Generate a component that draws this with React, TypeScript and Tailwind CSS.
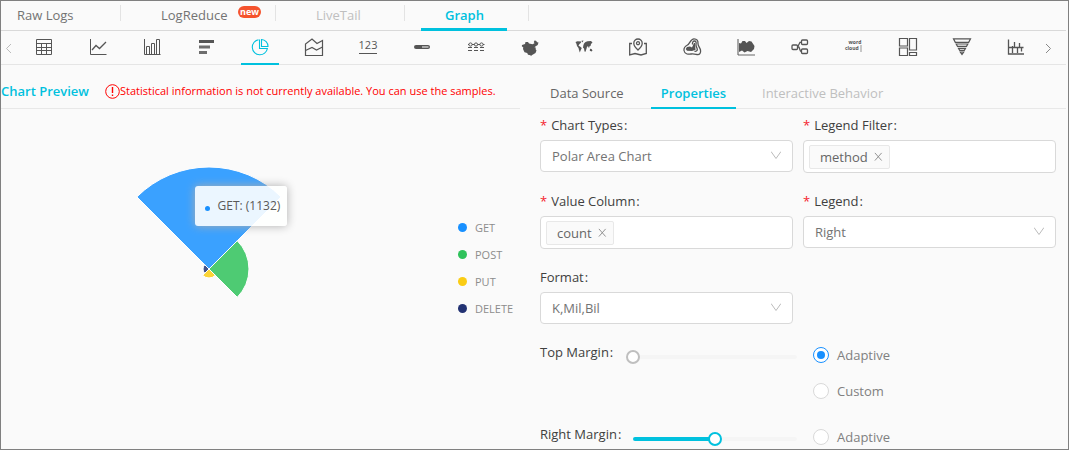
import React, { useState, type ReactNode } from "react";

const line = { fill: "none", stroke: "currentColor", strokeWidth: 1 } as const;

const icons: { name: string; art: ReactNode }[] = [
  {
    name: "Table",
    art: (
      <g {...line}>
        <path d="M1.500 1.500h15v15h-15zM1.500 5.500h15M1.500 9.500h15M1.500 12.500h15M6.500 5v11M11.500 5v11" />
      </g>
    ),
  },
  {
    name: "Line chart",
    art: (
      <g {...line}>
        <path d="M1.500 1v15.500h16" />
        <path d="M3 12l4-4.500 3.500 3L17 4" strokeWidth={1.3} />
      </g>
    ),
  },
  {
    name: "Bar chart",
    art: (
      <g {...line}>
        <path d="M1.500 1v15.500h16M3.500 16V8.500h3V16M8.500 16V5.500h3V16M13.500 16V1.500h3V16" />
      </g>
    ),
  },
  {
    name: "Horizontal bar chart",
    art: (
      <g fill="currentColor">
        <path d="M2 2h15v3H2z" />
        <path d="M2 7.500h11v3H2zM2 13h8v3H2z" opacity=".85" />
      </g>
    ),
  },
  {
    name: "Pie chart",
    art: (
      <g {...line} strokeWidth={1.1}>
        <path d="M7.500 1.700A7.600 7.600 0 1 0 16.400 10.500H8.500V1.500" />
        <path d="M10.500 1.500v7h6.500a7 7 0 0 0-6.500-7z" />
      </g>
    ),
  },
  {
    name: "Area chart",
    art: (
      <g {...line} strokeWidth={1.2}>
        <path d="M.5 17.500V6L7 1l5 4.500 5.500-3v15z" />
        <path d="M.5 12.500L7 9.500l4.500 2.500 6-3" />
      </g>
    ),
  },
  {
    name: "Single value",
    art: (
      <g>
        <text x="9" y="11" textAnchor="middle" fontSize="11" fill="currentColor">123</text>
        <path {...line} d="M0 15.500h18" />
      </g>
    ),
  },
  {
    name: "Progress",
    art: (
      <g>
        <rect x="1" y="7" width="16" height="4" rx="2" fill="currentColor" />
        <path stroke="#fff" d="M9 9h6.500" />
      </g>
    ),
  },
  {
    name: "Flow",
    art: (
      <g {...line}>
        <circle cx="3.500" cy="6.500" r="1.600" />
        <circle cx="9" cy="6.500" r="1.600" />
        <circle cx="14.500" cy="6.500" r="1.600" />
        <path d="M1 6.500h1M5 6.500h2.500M10.500 6.500h2.500M16 6.500h1.500" />
        <path d="M1 9.500h4M7 9.500h4M13 9.500h4M1 12.500h4M7 12.500h4M13 12.500h4" />
      </g>
    ),
  },
  {
    name: "China map",
    art: (
      <path
        fill="currentColor"
        d="M1 7l3-1 .5-2L7 4l1 1.500 3.500.8 2-1L12.800 4l.7-1.500 1.500.3 1.200 1.500 1.300.2-.8 2.500-2 1.200-1.200 1.100 1.500.4-.5 1.300 1 1.500-1 2.500-2.500 1.500-1.300.8-.7 1-.5-1-2.500-.5-.8-1.800-2.700-.7L2 11l.3-1.500L.8 8.300z"
      />
    ),
  },
  {
    name: "World map",
    art: (
      <path
        fill="currentColor"
        d="M.5 4l2-.8 4 .3-.8 1.500-1.200 1-1 1.800 1.500.8 1.800 1.500-1 1.800-1 2.600-.8-2.500-.5-2-1.500-2L1.500 6zM6.500 2.800l2-.3-1 2zM8.300 7.500l.7-2L10.500 4l2-.7 3.500-.3 1.500 1.500L16 6l-.5 2-1 .3-.5 2-1-2-1 .5-.5 2-1 3-1-.3-.5-3-1-.8zM15 10.800l1.500.2 1 1.500-1 1-1.700-.8z"
      />
    ),
  },
  {
    name: "Pin map",
    art: (
      <g {...line} strokeWidth={1.300}>
        <path d="M9 12S4.800 8.200 4.800 5.200a4.200 4.200 0 0 1 8.400 0C13.200 8.200 9 12 9 12z" />
        <circle cx="9" cy="5.200" r="1.500" />
        <path d="M3 5.500H.7v11.500l5.300-1.500 6 1.500 5.300-1.500V5.500H15" />
      </g>
    ),
  },
  {
    name: "Heat map",
    art: (
      <g {...line} strokeWidth={1.300}>
        <path d="M11 .8c3 0 4.200 2 4 4.700-.2 2.500 2 4 2.500 6.500.6 3-1 5-3.500 4.500-2-.4-3.500-.9-6-.5-3 .5-6.500-.5-7-3.500-.4-3 1.500-4.500 3.500-5.500C7 5.800 7.500.8 11 .8z" />
        <path d="M9.500 6.500c-.3-2 .5-3.500 2-3.500s1.900 1.500 1.500 3.500c-.2 2 1.300 3.500 1.300 5s-1.300 2-2.800 1.800" />
        <path fill="currentColor" stroke="none" d="M11 5h1l.5 7-2 .5L9 13l-5-.3L2.700 11 4 9l3-.5 2 1z" />
      </g>
    ),
  },
  {
    name: "Stream chart",
    art: (
      <g>
        <path fill="currentColor" d="M2 5l2 .5L5.500 3 8 3l1.500 2L12 3l2.500.5L17.500 8 17 11l-3 3-3.500-1-3 1.500L5 12.500 2 14z" />
        <path {...line} d="M1 1v16" />
        <path stroke="currentColor" strokeOpacity=".6" strokeWidth="1.500" d="M1 17h17" />
      </g>
    ),
  },
  {
    name: "Topology",
    art: (
      <g {...line} strokeWidth={1.300}>
        <rect x="1" y="7" width="5.500" height="4.500" rx="1" />
        <rect x="10.500" y="2" width="6" height="4.500" rx="1" />
        <rect x="10.500" y="11" width="6" height="4.500" rx="1" />
        <path d="M6.500 9.200L9 4.300h1.500M6.500 9.200h1.500l1.500 4h1" />
      </g>
    ),
  },
  {
    name: "Word cloud",
    art: (
      <g fill="currentColor" fontSize="5" fontWeight="700">
        <text x="3.500" y="5.500">word</text>
        <text x="0" y="12">cloud</text>
        <path d="M15.500 7h1v7h-1z" opacity=".6" />
      </g>
    ),
  },
  {
    name: "Treemap",
    art: (
      <g {...line} strokeWidth={1.200}>
        <path d="M.5.500h8v7.500h-8zM.5 10h8v7.500h-8zM10.500.500h7v11.500h-7zM10.500 14.500h7v3h-7z" />
      </g>
    ),
  },
  {
    name: "Funnel",
    art: (
      <g {...line} strokeWidth={1.200}>
        <path d="M.5.800h17l-1.800 3.500H2.300zM3.200 6h11.600l-1.300 2.300h-9zM5.500 10.300h7l-1.200 2H6.700zM7.300 14h3.400L9 16.500z" />
      </g>
    ),
  },
  {
    name: "Histogram",
    art: (
      <g {...line} strokeWidth={1.300}>
        <path d="M1.500 1.500v14.500H17M2 9.500h14.500M5.500 8V15M7.500 4v6M10.500 9.500V15M12.500 5v4.500M14.500 9V13.500" />
      </g>
    ),
  },
];

function Chevron({ d, className }: { d: string; className: string }) {
  return (
    <svg viewBox="0 0 10 10" className={className} fill="none" stroke="currentColor" aria-hidden="true">
      <path d={d} />
    </svg>
  );
}

const tabs = [
  { label: "Raw Logs", box: "w-[98px] pl-4", on: true },
  { label: "LogReduce", box: "w-[117px] pl-6", on: true },
  { label: "LiveTail", box: "w-[91px] pl-6", on: false },
  { label: "Graph", box: "w-[86px] pl-6", on: true },
];

function TopTabs() {
  return (
    <nav className="flex h-[30px] border-b border-[#d9d9d9]" aria-label="Views">
      {tabs.map(({ label, box, on }) => {
        const active = label === "Graph";
        return (
          <div key={label} className="flex shrink-0">
            <button
              type="button"
              disabled={!on}
              className={`relative -mb-px flex items-center whitespace-nowrap border-b-3 pt-px text-left ${box} ${
                active
                  ? "border-[#00c1de] font-semibold text-[#00c1de]"
                  : on
                    ? "border-transparent text-[#737373]"
                    : "border-transparent text-[#bfbfbf]"
              }`}
            >
              {label}
              {label === "LogReduce" && (
                <span className="absolute left-[101px] top-[5px] flex h-3 w-[23px] items-center justify-center rounded-full bg-[#f5532d] text-[9px] font-bold text-white">
                  new
                </span>
              )}
            </button>
            <span className="ml-[21px] mr-4 mt-1 h-4 w-px bg-[#e3e3e3]" />
          </div>
        );
      })}
    </nav>
  );
}

function ChartTypeBar() {
  return (
    <div className="flex h-[34px] border-b border-[#e5e5e5]" role="toolbar" aria-label="Chart type">
      <button type="button" aria-label="Previous" className="flex w-4 items-center justify-center text-[#bbb]">
        <Chevron d="M7 1L2.500 5.500 7 10" className="size-[10px]" />
      </button>
      {icons.map(({ name, art }) => (
        <button
          key={name}
          type="button"
          aria-label={name}
          className={`mx-2 -mb-px flex w-[38px] justify-center border-b-2 pt-[7px] ${
            name === "Pie chart" ? "border-[#00c1de] text-[#00c1de]" : "border-transparent text-[#555]"
          }`}
        >
          <svg viewBox="0 0 18 18" className="size-[18px] overflow-visible" aria-hidden="true">
            {art}
          </svg>
        </button>
      ))}
      <button type="button" aria-label="Next" className="flex w-[10px] items-center justify-center text-[#888]">
        <Chevron d="M3 1l4.500 4.500L3 10" className="size-[10px]" />
      </button>
    </div>
  );
}

const sectors = [
  { name: "GET", radius: 102, start: -135, color: "#1890ff", dot: "bg-[#1890ff]" },
  { name: "POST", radius: 40, start: -45, color: "#2fc25b", dot: "bg-[#2fc25b]" },
  { name: "PUT", radius: 9, start: 45, color: "#facc14", dot: "bg-[#facc14]" },
  { name: "DELETE", radius: 6, start: 135, color: "#223273", dot: "bg-[#223273]" },
];

function sectorPath(radius: number, start: number) {
  const at = (deg: number) => {
    const a = (deg * Math.PI) / 180;
    return `${104 + radius * Math.cos(a)} ${104 + radius * Math.sin(a)}`;
  };
  return `M104 104L${at(start)}A${radius} ${radius} 0 0 1 ${at(start + 90)}Z`;
}

function PolarChart() {
  return (
    <div className="flex items-center pt-14">
      <div className="flex flex-1 justify-center">
        <div className="relative size-[208px]">
          <svg viewBox="0 0 208 208" className="size-full" role="img" aria-label="Requests by method">
            {sectors.map((s) => (
              <path key={s.name} d={sectorPath(s.radius, s.start)} fill={s.color} fillOpacity=".85" stroke="#fff" />
            ))}
          </svg>
          <div className="absolute left-[90px] top-[21px] flex h-10 w-[92px] items-center whitespace-nowrap rounded-[3px] bg-white/90 pl-[10px] text-xs text-[#595959] shadow-[0_0_10px_#aeaeae]">
            <span className="mr-2 mt-1 size-[5px] rounded-full bg-[#1890ff]" />
            GET: (1132)
          </div>
        </div>
      </div>
      <ul className="w-[104px] pb-0.5 pl-[42px] text-[11px] text-[#8c8c8c]">
        {sectors.map((s) => (
          <li key={s.name} className="flex h-[27px] items-center gap-2">
            <span className={`size-[9px] rounded-full ${s.dot}`} />
            {s.name}
          </li>
        ))}
      </ul>
    </div>
  );
}

function Label({ id, text, required }: { id: string; text: string; required?: boolean }) {
  return (
    <label htmlFor={id} className="flex h-[31px] items-center text-[#404040]">
      {required && <span className="mr-1 text-[#f5222d]">*</span>}
      {text}
      <span className="ml-px">:</span>
    </label>
  );
}

function SelectField({ id, label, value, required }: { id: string; label: string; value: string; required?: boolean }) {
  return (
    <div>
      <Label id={id} text={label} required={required} />
      <div className="relative">
        <select
          id={id}
          className="block h-8 w-full appearance-none rounded-sm border border-[#d9d9d9] bg-white pl-[11px] pr-8 text-[#737373]"
        >
          <option>{value}</option>
        </select>
        <Chevron d="M0 1.500l5 7 5-7" className="pointer-events-none absolute right-3 top-[10px] size-[10px] text-[#bbb]" />
      </div>
    </div>
  );
}

function TagField({ id, label, value }: { id: string; label: string; value: string }) {
  const [tags, setTags] = useState([value]);
  return (
    <div>
      <Label id={id} text={label} required />
      <div className="flex h-[33px] items-center rounded-sm border border-[#d9d9d9] bg-white px-[5px]">
        {tags.map((tag) => (
          <span
            key={tag}
            className="flex h-6 items-center rounded-xs border border-[#e8e8e8] bg-[#fafafa] pl-[10px] pr-[6px] text-[#666]"
          >
            {tag}
            <button type="button" aria-label={`Remove ${tag}`} onClick={() => setTags([])} className="ml-[6px] text-[#888]">
              <Chevron d="M1 1l7.500 8.500M8.500 1L1 9.500" className="size-[9px] overflow-visible" />
            </button>
          </span>
        ))}
        <input id={id} className="h-6 min-w-0 flex-1 bg-transparent pl-1 outline-none" />
      </div>
    </div>
  );
}

function MarginRow({ id, label, initial, mode, options }: { id: string; label: string; initial: number; mode: string; options: string[] }) {
  const [value, setValue] = useState(initial);
  const [choice, setChoice] = useState(mode);
  return (
    <div className="grid grid-cols-[86px_178px_1fr]">
      <label htmlFor={id} className="flex h-[26px] items-center whitespace-nowrap text-[#404040]">
        {label}
        <span className="ml-px">:</span>
      </label>
      <div className="relative h-[26px]">
        <div className="absolute inset-x-[7px] top-4 h-1 rounded-sm bg-[#f5f5f5]">
          <div className="h-full rounded-sm bg-[#00c1de]" style={{ width: `${value}%` }} />
        </div>
        <input
          id={id}
          type="range"
          value={value}
          onChange={(e) => setValue(Number(e.target.value))}
          className={`absolute inset-x-0 top-[11px] h-[14px] w-full appearance-none bg-transparent [&::-webkit-slider-thumb]:size-[14px] [&::-webkit-slider-thumb]:appearance-none [&::-webkit-slider-thumb]:rounded-full [&::-webkit-slider-thumb]:border-2 [&::-webkit-slider-thumb]:bg-white ${
            value === 0
              ? "[&::-webkit-slider-thumb]:border-[#bfbfbf]"
              : "[&::-webkit-slider-thumb]:border-[#00c1de]"
          }`}
        />
      </div>
      <div className="flex flex-col gap-4 pl-[9px] pt-[6px]">
        {options.map((option) => (
          <label key={option} className="flex h-5 items-center gap-2 text-[#808080]">
            <input
              type="radio"
              name={`${id}-mode`}
              checked={choice === option}
              onChange={() => setChoice(option)}
              className="grid size-4 appearance-none place-content-center rounded-full border border-[#d9d9d9] bg-white before:size-2 before:rounded-full checked:border-[#1890ff] checked:before:bg-[#1890ff]"
            />
            {option}
          </label>
        ))}
      </div>
    </div>
  );
}

export default function App() {
  return (
    <div className="min-h-screen border border-[#808080] bg-[#fafafa] pr-0.5 font-['Open_Sans',sans-serif] text-[13px] leading-5">
      <TopTabs />
      <ChartTypeBar />
      <main className="grid grid-cols-[519fr_526fr] gap-x-5">
        <section>
          <header className="flex h-[44px] items-center whitespace-nowrap border-b border-[#e8e8e8] pt-[9px]">
            <h2 className="w-[104px] font-semibold text-[#00c1de]">Chart Preview</h2>
            <p className="flex items-center text-[11px] text-[#f00]">
              <svg viewBox="0 0 15 15" className="size-[15px]" fill="none" stroke="currentColor" aria-hidden="true">
                <circle cx="7.500" cy="7.500" r="6.800" />
                <path d="M7.500 3v6M7.500 10.500v1.500" strokeWidth="1.400" />
              </svg>
              Statistical information is not currently available. You can use the samples.
            </p>
          </header>
          <PolarChart />
        </section>
        <section>
          <nav className="flex h-[44px] border-b border-[#e8e8e8] pt-[13px]" aria-label="Settings">
            <button type="button" className="w-[111px] pl-[10px] text-left text-[#666]">Data Source</button>
            <button type="button" className="-mb-px w-[85px] border-b-2 border-[#00c1de] font-semibold text-[#00c1de]">
              Properties
            </button>
            <button type="button" disabled className="ml-[26px] whitespace-nowrap text-[#bfbfbf]">
              Interactive Behavior
            </button>
          </nav>
          <form className="pr-[10px]">
            <div className="grid grid-cols-2 items-start gap-x-[10px] gap-y-3">
              <SelectField id="chart-type" label="Chart Types" value="Polar Area Chart" required />
              <TagField id="legend-filter" label="Legend Filter" value="method" />
              <TagField id="value-column" label="Value Column" value="count" />
              <SelectField id="legend" label="Legend" value="Right" required />
              <SelectField id="format" label="Format" value="K,Mil,Bil" />
            </div>
            <div className="flex flex-col gap-5 pt-[15px]">
              <MarginRow id="top-margin" label="Top Margin" initial={0} mode="Adaptive" options={["Adaptive", "Custom"]} />
              <MarginRow id="right-margin" label="Right Margin" initial={50} mode="" options={["Adaptive"]} />
            </div>
          </form>
        </section>
      </main>
    </div>
  );
}
